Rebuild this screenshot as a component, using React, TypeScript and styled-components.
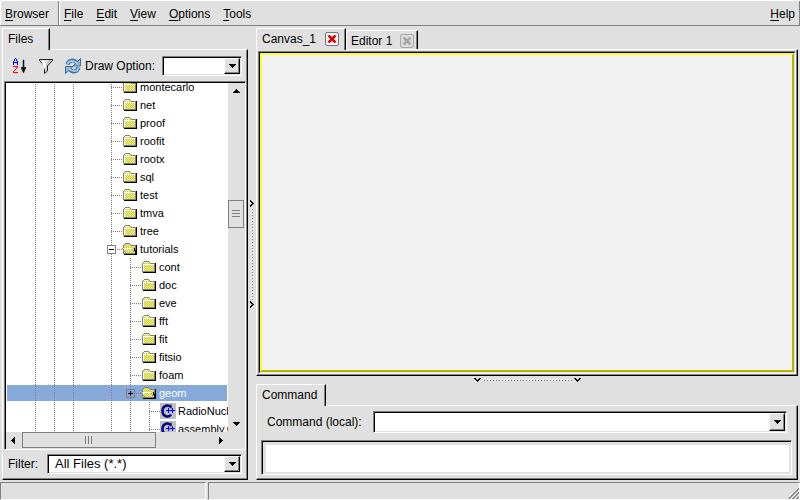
import React from "react";
import styled, { createGlobalStyle, css } from "styled-components";

const FACE = "#e0e0e0";
const SHADE = "#808080";
const LIGHT = "#ffffff";
const DARK = "#000000";
const SELECTED = "#86a9d9";

const GlobalStyle = createGlobalStyle`
  * { box-sizing: border-box; }
  html, body { margin: 0; background: ${FACE}; }
  body, button, input, select, textarea {
    font-family: "Liberation Sans", Arial, sans-serif;
    font-size: 12px;
    line-height: 16px;
    color: #000;
  }
  button { padding: 0; border: 0; background: none; }
`;

const sunken = css`
  border: 1px solid;
  border-color: ${SHADE} ${LIGHT} ${LIGHT} ${SHADE};
  box-shadow: inset 1px 1px ${DARK}, inset -1px -1px ${FACE};
  padding: 1px;
`;

const raised = css`
  border: 1px solid;
  border-color: ${LIGHT} ${DARK} ${DARK} ${LIGHT};
  box-shadow: inset -1px -1px ${SHADE};
`;

const Window = styled.div`
  display: flex;
  flex-direction: column;
  height: 100vh;
  min-height: 400px;
  overflow: hidden;
  background: ${FACE};
`;

const MenuBar = styled.nav`
  display: flex;
  flex: none;
  height: 26px;
  border-top: 1px solid ${LIGHT};
  border-bottom: 1px solid ${SHADE};
`;

const MenuGroup = styled.div<{ $grow?: boolean }>`
  display: flex;
  align-items: center;
  gap: 13px;
  padding: 2px 4px 0;
  border-left: 1px solid ${LIGHT};
  border-right: 1px solid ${SHADE};
  flex: ${(p) => (p.$grow ? "1" : "0 0 59px")};
`;

const MenuButton = styled.button<{ $end?: boolean }>`
  margin-left: ${(p) => (p.$end ? "auto" : "0")};
`;

const Key = styled.span`
  text-decoration: underline;
  text-underline-offset: 2px;
`;

const Main = styled.main`
  display: flex;
  flex: 1;
  min-height: 0;
  padding: 2px 2px 0;
`;

const Column = styled.section<{ $width?: number }>`
  display: flex;
  flex-direction: column;
  min-width: 0;
  flex: ${(p) => (p.$width ? `0 0 ${p.$width}px` : "1")};
`;

const Tabs = styled.div`
  display: flex;
  align-items: flex-end;
  flex: none;
  height: 22px;
  margin-bottom: -1px;
`;

const Tab = styled.div<{ $active?: boolean; $width: number }>`
  display: flex;
  align-items: center;
  justify-content: space-between;
  position: relative;
  z-index: ${(p) => (p.$active ? 1 : 0)};
  width: ${(p) => p.$width}px;
  height: ${(p) => (p.$active ? 22 : 19)}px;
  margin-bottom: ${(p) => (p.$active ? 0 : 1)}px;
  padding: ${(p) => (p.$active ? "0 6px 2px 5px" : "1px 3px 0 4px")};
  background: ${FACE};
  border: 1px solid;
  border-color: ${LIGHT} ${DARK} transparent ${LIGHT};
  border-bottom: 0;
  border-top-left-radius: 2px;
  box-shadow: inset -1px 0 ${SHADE};
`;

const TabLabel = styled.button``;

const CloseButton = styled.button<{ $active?: boolean }>`
  display: flex;
  width: 14px;
  height: 14px;
  align-items: center;
  justify-content: center;
  border: 1px solid ${(p) => (p.$active ? "#777" : "#aaa")};
  border-radius: 2px;
  background: ${(p) => (p.$active ? "#f4f4f4" : "#dadada")};
  color: ${(p) => (p.$active ? "#d90000" : "#a6a6a6")};
`;

const Pane = styled.div<{ $grow?: boolean }>`
  display: flex;
  flex-direction: column;
  flex: ${(p) => (p.$grow ? "1" : "none")};
  min-height: 0;
  padding: 1px;
  ${raised}
`;

const Toolbar = styled.div`
  display: flex;
  align-items: center;
  flex: none;
  height: 30px;
  padding: 0 4px 0 6px;
`;

const ToolButton = styled.button`
  display: flex;
  width: 18px;
  height: 18px;
  margin-right: 9px;
  &:last-of-type { margin-right: 3px; }
`;

const FieldLabel = styled.label<{ $width: number }>`
  flex: 0 0 ${(p) => p.$width}px;
  white-space: nowrap;
`;

const Combo = styled.div<{ $tall?: boolean }>`
  display: flex;
  position: relative;
  flex: 1;
  min-width: 0;
  height: ${(p) => (p.$tall ? 22 : 20)}px;
  background: ${LIGHT};
  ${sunken}
`;

const ComboInput = styled.input`
  flex: 1;
  min-width: 0;
  border: 0;
  outline: 0;
  padding: 0 4px;
  background: transparent;
`;

const ComboSelect = styled.select`
  flex: 1;
  min-width: 0;
  border: 0;
  outline: 0;
  padding: 0 6px;
  appearance: none;
  background: transparent;
  font-size: 13px;
`;

const DropButton = styled.button`
  display: flex;
  align-items: center;
  justify-content: center;
  flex: 0 0 16px;
  background: ${FACE};
  ${raised}
`;

const DropMark = styled.span`
  position: absolute;
  right: 1px;
  top: 1px;
  bottom: 1px;
  width: 16px;
  display: flex;
  align-items: center;
  justify-content: center;
  background: ${FACE};
  pointer-events: none;
  ${raised}
`;

const TreeFrame = styled.div`
  display: grid;
  flex: 1;
  min-height: 0;
  grid-template-columns: minmax(0, 1fr) 16px;
  grid-template-rows: minmax(0, 1fr) 16px;
  ${sunken}
`;

const TreeView = styled.div`
  overflow: hidden;
  background: ${LIGHT};
`;

const Tree = styled.ul`
  list-style: none;
  margin: -5px 0 0;
  padding: 0;
`;

const Row = styled.li<{ $selected?: boolean }>`
  display: flex;
  align-items: center;
  height: 18px;
  margin: 0 1px;
  padding-left: 28px;
  font-size: 11px;
  white-space: nowrap;
  color: ${(p) => (p.$selected ? "#fff" : "#000")};
  background: ${(p) =>
    p.$selected
      ? `linear-gradient(${SELECTED}, ${SELECTED}) 0 1px / 100% 16px no-repeat`
      : "none"};
`;

const dots = "repeating-linear-gradient(to bottom, #808080 0 1px, transparent 1px 2px)";
const dashes = "repeating-linear-gradient(to right, #808080 0 1px, transparent 1px 2px)";

const Guide = styled.span<{ $line: boolean }>`
  flex: 0 0 19px;
  height: 18px;
  background: ${(p) => (p.$line ? `${dots} 0 0 / 1px 100% no-repeat` : "none")};
`;

const Joint = styled.span`
  position: relative;
  flex: 0 0 11px;
  height: 18px;
  background: ${dots} 0 0 / 1px 100% no-repeat, ${dashes} 0 9px / 100% 1px no-repeat;
`;

const Expander = styled.button<{ $selected?: boolean }>`
  position: absolute;
  left: -4px;
  top: 5px;
  display: flex;
  width: 9px;
  height: 9px;
  border: 1px solid ${SHADE};
  background: ${(p) => (p.$selected ? SELECTED : LIGHT)};
`;

const ItemIcon = styled.svg`
  flex: none;
`;

const RowName = styled.span`
  padding-left: 2px;
  line-height: 18px;
`;

const ScrollBar = styled.div<{ $horizontal?: boolean }>`
  display: flex;
  flex-direction: ${(p) => (p.$horizontal ? "row" : "column")};
  background: ${FACE};
`;

const ScrollArrow = styled.button`
  display: flex;
  align-items: center;
  justify-content: center;
  flex: 0 0 16px;
  min-height: 16px;
`;

const ScrollGap = styled.span<{ $share: number }>`
  flex: ${(p) => p.$share} 0 0;
`;

const Thumb = styled.div<{ $share: number }>`
  display: flex;
  align-items: center;
  justify-content: center;
  flex: ${(p) => p.$share} 0 0;
  border: 1px solid ${SHADE};
`;

const FilterRow = styled.div`
  display: flex;
  align-items: center;
  flex: none;
  height: 28px;
  padding: 0 4px;
`;

const ColumnSplitter = styled.div`
  display: flex;
  flex-direction: column;
  align-items: center;
  justify-content: center;
  gap: 1px;
  flex: 0 0 8px;
`;

const RowSplitter = styled.div`
  display: flex;
  align-items: center;
  justify-content: center;
  gap: 2px;
  flex: 0 0 8px;
`;

const DotsDown = styled.span`
  width: 2px;
  height: 92px;
  background:
    repeating-linear-gradient(to bottom, #808080 0 1px, transparent 1px 3px) 1px 1px / 1px 100% no-repeat,
    repeating-linear-gradient(to bottom, #fff 0 1px, transparent 1px 3px) 0 0 / 1px 100% no-repeat;
`;

const DotsAcross = styled.span`
  width: 89px;
  height: 2px;
  background:
    repeating-linear-gradient(to right, #808080 0 1px, transparent 1px 3px) 1px 1px / 100% 1px no-repeat,
    repeating-linear-gradient(to right, #fff 0 1px, transparent 1px 3px) 0 0 / 100% 1px no-repeat;
`;

const CanvasFrame = styled.div`
  display: flex;
  flex: 1;
  min-height: 0;
  border: 1px solid;
  border-color: ${SHADE} ${LIGHT} ${LIGHT} ${SHADE};
`;

const CanvasEdge = styled.div`
  display: flex;
  flex: 1;
  border: 1px solid;
  border-color: ${DARK} ${FACE} ${FACE} ${DARK};
`;

const Canvas = styled.div`
  flex: 1;
  background: #f2f2f2;
  border: 2px solid;
  border-color: #ffff26 #b5b500 #b5b500 #ffff26;
`;

const CommandRow = styled.div`
  display: flex;
  align-items: center;
  padding: 4px 9px 7px;
`;

const OutputFrame = styled.div`
  display: flex;
  margin: 0 4px 3px 3px;
  height: 35px;
  ${sunken}
  padding: 4px 2px 2px 4px;
`;

const Output = styled.textarea`
  flex: 1;
  min-width: 0;
  border: 0;
  outline: 0;
  resize: none;
  padding: 0;
  background: ${LIGHT};
`;

const StatusBar = styled.footer`
  display: flex;
  flex: none;
  gap: 2px;
  height: 20px;
  padding-top: 2px;
`;

const StatusCell = styled.div<{ $width?: number }>`
  display: flex;
  align-items: flex-end;
  justify-content: flex-end;
  flex: ${(p) => (p.$width ? `0 0 ${p.$width}px` : "1")};
  border: 1px solid;
  border-color: ${SHADE} ${LIGHT} ${LIGHT} ${SHADE};
`;

type Direction = "up" | "down" | "left" | "right";

const arrowPath: Record<Direction, string> = {
  down: "M0 1h7v1h-1v1h-1v1h-1v1h-1v-1h-1v-1h-1v-1h-1z",
  up: "M3 1h1v1h1v1h1v1h1v1h-7v-1h1v-1h1v-1h1z",
  left: "M4 0v7h-1v-1h-1v-1h-1v-1h-1v-1h1v-1h1v-1h1v-1z",
  right: "M2 0v7h1v-1h1v-1h1v-1h1v-1h-1v-1h-1v-1h-1v-1z",
};

const Arrow = ({ to }: { to: Direction }) => (
  <svg width="7" height="7" shapeRendering="crispEdges" aria-hidden="true">
    <path d={arrowPath[to]} />
  </svg>
);

const Chevron = ({ down }: { down?: boolean }) =>
  down ? (
    <svg width="7" height="4" shapeRendering="crispEdges" aria-hidden="true">
      <path d="M0 0h2v1h1v1h1v-1h1v-1h2v1h-1v1h-1v1h-1v1h-1v-1h-1v-1h-1v-1h-1z" />
    </svg>
  ) : (
    <svg width="4" height="7" shapeRendering="crispEdges" aria-hidden="true">
      <path d="M0 0h1v1h1v1h1v1h1v1h-1v1h-1v1h-1v1h-1v-2h1v-1h1v-1h-1v-1h-1z" />
    </svg>
  );

const Cross = () => (
  <svg width="8" height="8" aria-hidden="true">
    <path d="M0.500 0.500L7.500 7.500M7.500 0.500L0.500 7.500" stroke="currentColor" strokeWidth="2.600" />
  </svg>
);

const Grip = ({ vertical }: { vertical?: boolean }) => (
  <svg width="8" height="8" shapeRendering="crispEdges" aria-hidden="true">
    <path
      d={vertical ? "M0 0h8v1H0zM0 3h8v1H0zM0 6h8v1H0z" : "M0 0h1v8H0zM3 0h1v8H3zM6 0h1v8H6z"}
      fill={SHADE}
    />
  </svg>
);

const SortIcon = () => (
  <svg width="18" height="18" aria-hidden="true">
    <path
      d="M5 1h1v1H5zM4 2h1v2H4zM6 2h1v2H6zM3 4h1v4H3zM7 4h1v4H7zM4 5h3v1H4z"
      fill="#0000ff"
      shapeRendering="crispEdges"
    />
    <path
      d="M3 9h5v2H7v1H6v1H5v1H4v1h4v1H3v-2h1v-1h1v-1h1v-1h1v-1H3z"
      fill="#ff0000"
      shapeRendering="crispEdges"
    />
    <path d="M13 3h1v7l2 0.500L13.500 16L11 10.500l2-0.500z" fill="#111" stroke="#111" strokeWidth="0.500" />
  </svg>
);

const FunnelIcon = () => (
  <svg width="18" height="18" aria-hidden="true">
    <path d="M2.500 2.500h13v1l-5 5.500v5l-3 2.500V9l-5-5.500z" fill="#c6c6c6" stroke="#222" />
    <path d="M4 3.500h7L8.500 8v6z" fill="#fff" />
  </svg>
);

const RefreshIcon = () => (
  <svg width="18" height="18" aria-hidden="true" fill="none">
    <path d="M3.500 7.500C4.500 3 9.500 2.500 12.500 5.500" stroke="#3b6ca5" strokeWidth="4" />
    <path d="M16.500 1.500v7.500H9z" fill="#8db6dc" stroke="#3b6ca5" />
    <path d="M3.500 7C4.500 3.500 9.500 2.500 13.500 6.500" stroke="#a5c7e6" strokeWidth="2" />
    <path d="M14.500 10.500C13.500 15 8.500 15.500 5.500 12.500" stroke="#3b6ca5" strokeWidth="4" />
    <path d="M1.500 16.500V9.500H9z" fill="#8db6dc" stroke="#3b6ca5" />
    <path d="M14.500 11C13.500 14.500 8.500 15.500 4.500 11.500" stroke="#a5c7e6" strokeWidth="2" />
  </svg>
);

const MeshPatterns = () => (
  <defs>
    <pattern id="mesh" width="2" height="2" patternUnits="userSpaceOnUse">
      <path d="M0 0h2v2H0z" fill="#ffff00" />
      <path d="M0 0h1v1H0zM1 1h1v1H1z" fill="#c0c0c0" />
    </pattern>
    <pattern id="mesh-open" width="2" height="2" patternUnits="userSpaceOnUse">
      <path d="M0 0h2v2H0z" fill="#c0c0c0" />
      <path d="M0 0h1v1H0zM1 1h1v1H1z" fill="#ffff00" />
    </pattern>
  </defs>
);

const FolderIcon = ({ open }: { open?: boolean }) => {
  const mesh = open ? "url(#mesh-open)" : "url(#mesh)";
  return (
    <ItemIcon width="16" height="14" shapeRendering="crispEdges" aria-hidden="true">
      <MeshPatterns />
      <path d="M2 3h13v10H2z" />
      <path d="M1 3h1V2h1V1h5v1h1v1h5v9H1z" fill={SHADE} />
      <path d="M2 3h1V2h5v1h1v1h4v7H2z" fill={mesh} />
      {open ? (
        <>
          <path d="M0 6h10v1h1v2h1v2h1v1H3v-2H2V8H1V7H0z" fill={SHADE} />
          <path d="M2 7h8v1h1v2h1v1H4v-1H3V8H2z" fill={mesh} />
          <path d="M1 6h9v1H1zM2 7h1v2H2z" fill="#fff" />
          <path d="M12 6h1v2h1v5h-1V9h-1z" />
        </>
      ) : (
        <path d="M2 4h11v1H3v6H2zM3 2h4v1H3z" fill="#fff" />
      )}
    </ItemIcon>
  );
};

const SourceIcon = () => (
  <ItemIcon width="16" height="16" aria-hidden="true">
    <path d="M0 0h16v16H0z" fill="#c0c0c0" />
    <path d="M11 4.500C9 1 2.500 2 2.500 8s6.500 7 8.500 3.500" fill="none" stroke="#000080" strokeWidth="2.500" />
    <path d="M11 1.500v4" stroke="#000080" strokeWidth="1" />
    <path d="M6 7h9v1H6zM8 5h1v5H8zM12 5h1v5h-1z" fill="#0000ff" shapeRendering="crispEdges" />
  </ItemIcon>
);

const ResizeGrip = () => (
  <svg width="12" height="12" aria-hidden="true">
    <path d="M0 12L12 0M4 12l8-8M8 12l4-4" stroke="#fff" strokeWidth="1" />
    <path d="M1 12.500L12.500 1M5 12.500L12.500 5M9 12.500l3.500-3.500" stroke={SHADE} strokeWidth="1.500" />
  </svg>
);

type Item = {
  name: string;
  depth: 0 | 1 | 2;
  icon?: "open" | "source";
  sign?: "+" | "-";
  selected?: boolean;
};

const items: Item[] = [
  ...["montecarlo", "net", "proof", "roofit", "rootx", "sql", "test", "tmva", "tree"].map(
    (name): Item => ({ name, depth: 0 })
  ),
  { name: "tutorials", depth: 0, icon: "open", sign: "-" },
  ...["cont", "doc", "eve", "fft", "fit", "fitsio", "foam"].map((name): Item => ({ name, depth: 1 })),
  { name: "geom", depth: 1, icon: "open", sign: "+", selected: true },
  { name: "RadioNuclides.C", depth: 2, icon: "source" },
  { name: "assembly.C", depth: 2, icon: "source" },
];

const guides = [true, true, true, false, true, true];

const TreeRow = ({ item }: { item: Item }) => (
  <Row $selected={item.selected}>
    {guides.slice(0, 4 + item.depth).map((line, i) => (
      <Guide key={i} $line={line} />
    ))}
    <Joint>
      {item.sign && (
        <Expander $selected={item.selected} aria-label={item.sign === "+" ? "Expand" : "Collapse"}>
          <svg width="7" height="7" shapeRendering="crispEdges">
            <path d={item.sign === "+" ? "M1 3h5v1H1zM3 1h1v5H3z" : "M1 3h5v1H1z"} />
          </svg>
        </Expander>
      )}
    </Joint>
    {item.icon === "source" ? <SourceIcon /> : <FolderIcon open={item.icon === "open"} />}
    <RowName>{item.name}</RowName>
  </Row>
);

const MenuEntry = ({ name, end }: { name: string; end?: boolean }) => (
  <MenuButton $end={end}>
    <Key>{name[0]}</Key>
    {name.slice(1)}
  </MenuButton>
);

export default function App() {
  return (
    <>
      <GlobalStyle />
      <Window>
        <MenuBar>
          <MenuGroup>
            <MenuEntry name="Browser" />
          </MenuGroup>
          <MenuGroup $grow>
            {["File", "Edit", "View", "Options", "Tools"].map((name) => (
              <MenuEntry key={name} name={name} />
            ))}
            <MenuEntry name="Help" end />
          </MenuGroup>
        </MenuBar>

        <Main>
          <Column $width={246}>
            <Tabs>
              <Tab $active $width={48}>
                <TabLabel>Files</TabLabel>
              </Tab>
            </Tabs>
            <Pane $grow>
              <Toolbar>
                <ToolButton aria-label="Sort"><SortIcon /></ToolButton>
                <ToolButton aria-label="Filter"><FunnelIcon /></ToolButton>
                <ToolButton aria-label="Refresh"><RefreshIcon /></ToolButton>
                <FieldLabel $width={77} htmlFor="draw-option">Draw Option:</FieldLabel>
                <Combo>
                  <ComboInput id="draw-option" />
                  <DropButton aria-label="Show draw options"><Arrow to="down" /></DropButton>
                </Combo>
              </Toolbar>
              <TreeFrame>
                <TreeView>
                  <Tree>
                    {items.map((item) => (
                      <TreeRow key={item.name} item={item} />
                    ))}
                  </Tree>
                </TreeView>
                <ScrollBar>
                  <ScrollArrow aria-label="Scroll up"><Arrow to="up" /></ScrollArrow>
                  <ScrollGap $share={102} />
                  <Thumb $share={26}><Grip vertical /></Thumb>
                  <ScrollGap $share={189} />
                  <ScrollArrow aria-label="Scroll down"><Arrow to="down" /></ScrollArrow>
                </ScrollBar>
                <ScrollBar $horizontal>
                  <ScrollArrow aria-label="Scroll left"><Arrow to="left" /></ScrollArrow>
                  <Thumb $share={133}><Grip /></Thumb>
                  <ScrollGap $share={57} />
                  <ScrollArrow aria-label="Scroll right"><Arrow to="right" /></ScrollArrow>
                </ScrollBar>
              </TreeFrame>
              <FilterRow>
                <FieldLabel $width={39} htmlFor="filter">Filter:</FieldLabel>
                <Combo>
                  <ComboSelect id="filter">
                    <option>All Files (*.*)</option>
                  </ComboSelect>
                  <DropMark aria-hidden="true"><Arrow to="down" /></DropMark>
                </Combo>
              </FilterRow>
            </Pane>
          </Column>

          <ColumnSplitter>
            <Chevron />
            <DotsDown />
            <Chevron />
          </ColumnSplitter>

          <Column>
            <Tabs>
              <Tab $active $width={90}>
                <TabLabel>Canvas_1</TabLabel>
                <CloseButton $active aria-label="Close Canvas_1"><Cross /></CloseButton>
              </Tab>
              <Tab $width={72}>
                <TabLabel>Editor 1</TabLabel>
                <CloseButton aria-label="Close Editor 1"><Cross /></CloseButton>
              </Tab>
            </Tabs>
            <Pane $grow>
              <CanvasFrame>
                <CanvasEdge>
                  <Canvas />
                </CanvasEdge>
              </CanvasFrame>
            </Pane>
            <RowSplitter>
              <Chevron down />
              <DotsAcross />
              <Chevron down />
            </RowSplitter>
            <Tabs>
              <Tab $active $width={70}>
                <TabLabel>Command</TabLabel>
              </Tab>
            </Tabs>
            <Pane>
              <CommandRow>
                <FieldLabel $width={106} htmlFor="command">Command (local):</FieldLabel>
                <Combo $tall>
                  <ComboInput id="command" />
                  <DropButton aria-label="Show command history"><Arrow to="down" /></DropButton>
                </Combo>
              </CommandRow>
              <OutputFrame>
                <Output aria-label="Command output" readOnly />
              </OutputFrame>
            </Pane>
          </Column>
        </Main>

        <StatusBar>
          <StatusCell $width={206} />
          <StatusCell><ResizeGrip /></StatusCell>
        </StatusBar>
      </Window>
    </>
  );
}
